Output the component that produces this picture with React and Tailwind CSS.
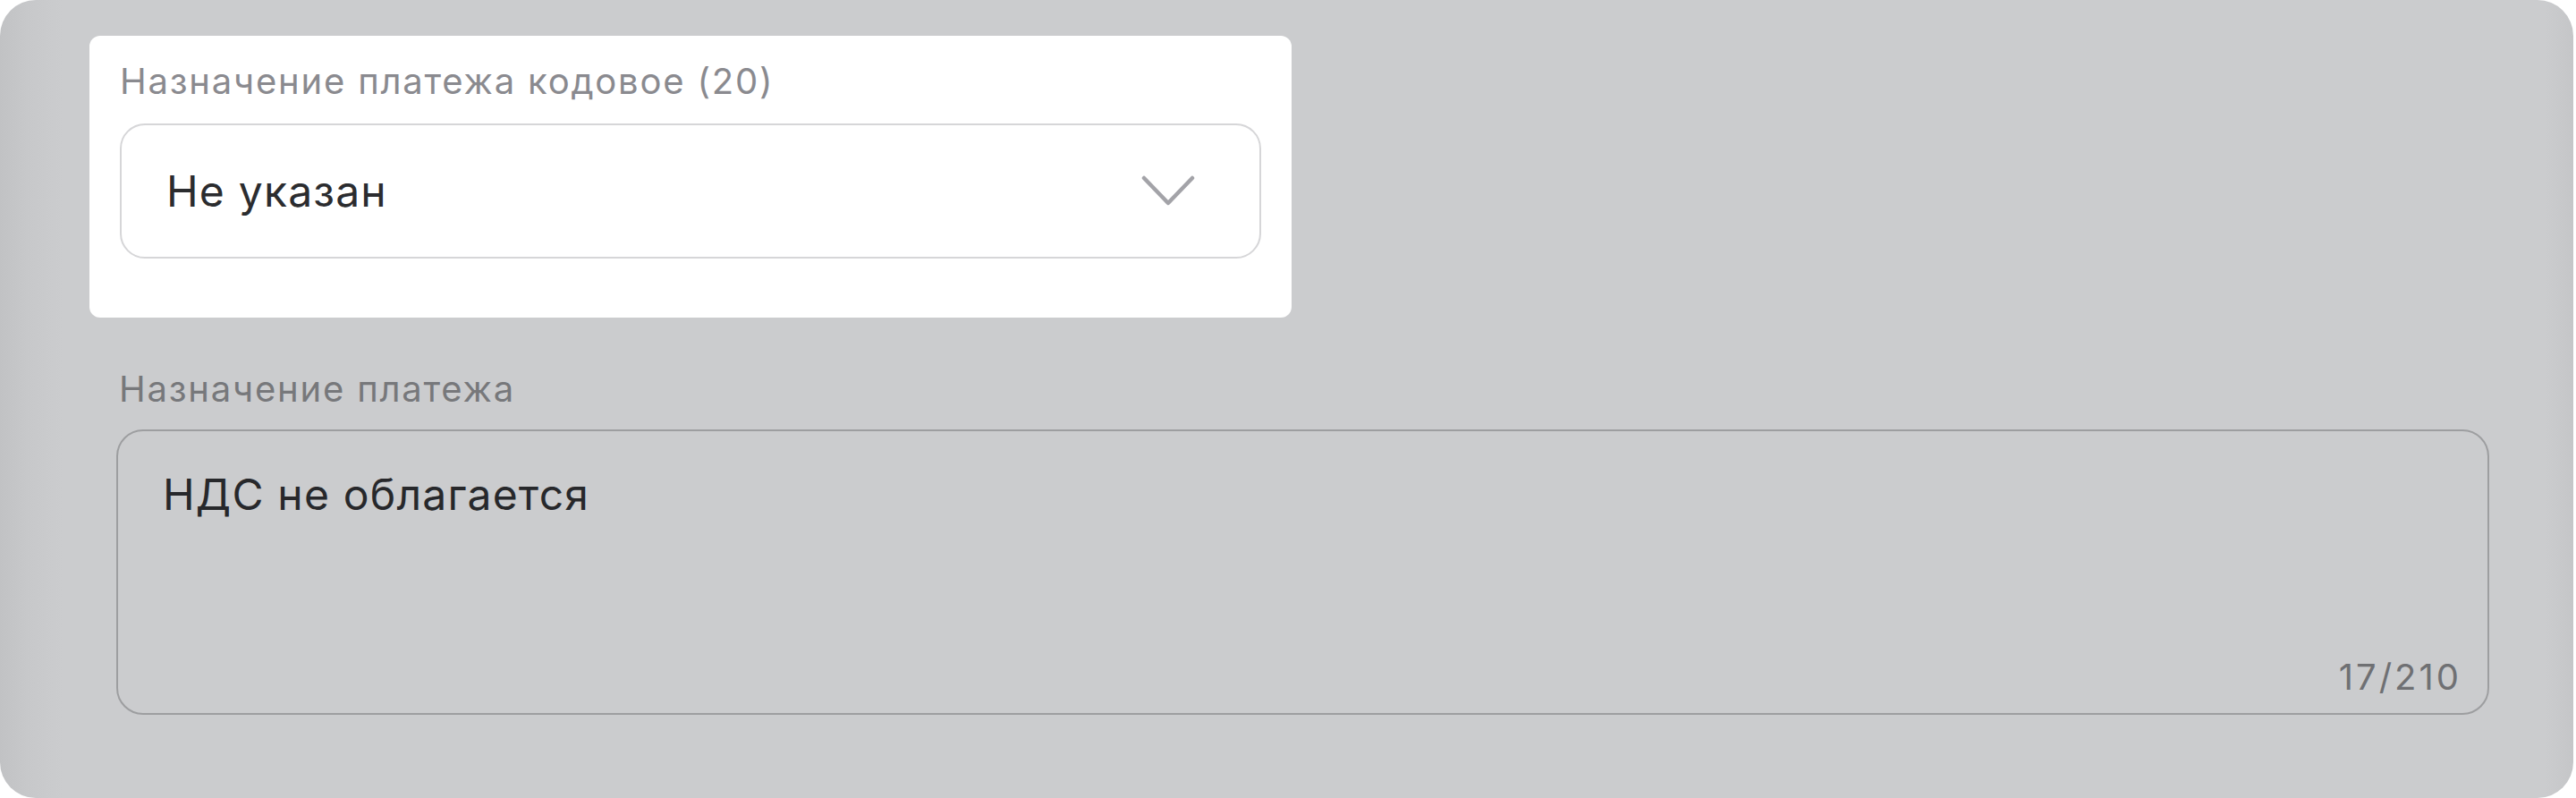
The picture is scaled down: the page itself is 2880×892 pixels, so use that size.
export default function App() {
  return (
    <div className="w-full h-[892px] bg-white" style={{ fontFamily: 'Inter, "Noto Sans", sans-serif' }}>
      <div className="w-[2877px] h-[892px] rounded-[40px] bg-[linear-gradient(to_right,#c1c2c4_0px,#c7c8ca_30px,#cbccce_70px,#cbccce_2845px,#c5c6c8_2877px)] pt-[40px] pl-[100px] pr-[94px] flex flex-col">
        <div className="w-[1344px] bg-white rounded-[12px] pt-[27px] pb-[66px] px-[34px] flex flex-col">
          <div className="text-[40px] leading-[48px] tracking-[1.8px] text-[#8a8a8f]">Назначение платежа кодовое (20)</div>
          <div className="mt-[23px] h-[151px] w-[1276px] border-2 border-[#d6d6d8] rounded-[28px] flex items-center justify-between pl-[50px] pr-[72px]">
            <span className="text-[48px] leading-[58px] tracking-[1.2px] text-[#2b2c2f]">Не указан</span>
            <svg width="60" height="36" viewBox="0 0 60 36" fill="none">
              <path d="M3 3 L30 31 L57 3" stroke="#a3a3a8" strokeWidth="4.5" strokeLinecap="round" strokeLinejoin="round" />
            </svg>
          </div>
        </div>
        <div className="mt-[56px] pl-[33px] text-[40px] leading-[48px] tracking-[1.8px] text-[#77787b]">Назначение платежа</div>
        <div className="mt-[21px] ml-[30px] h-[319px] border-2 border-[#9d9ea0] rounded-[30px] pt-[42px] pb-[16px] pl-[50px] pr-[29px] flex flex-col">
          <div className="text-[48px] leading-[58px] tracking-[1.2px] text-[#27282b]">НДС не облагается</div>
          <div className="flex-1" />
          <div className="self-end text-[40px] leading-[48px] tracking-[3px] text-[#6f7073]">17/210</div>
        </div>
      </div>
    </div>
  );
}
